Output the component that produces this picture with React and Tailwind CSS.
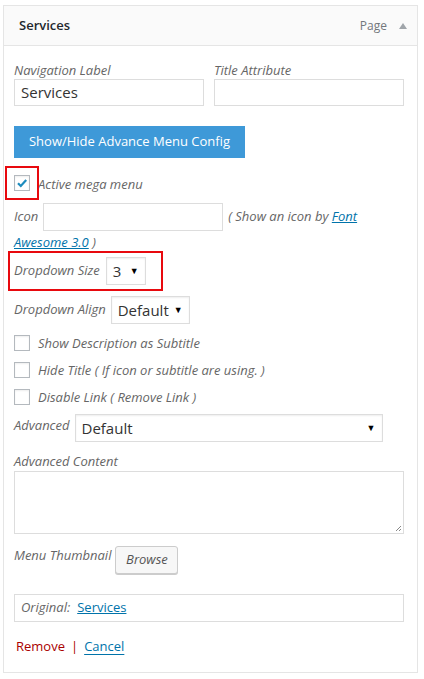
import React from 'react';

const Check = ({ checked }) => (
    <span className="w-4 h-4 border border-[#b4b9be] bg-white flex items-center justify-center shrink-0 shadow-[inset_0_1px_2px_rgba(0,0,0,0.07)]">
        {checked && (
            <svg width="12" height="12" viewBox="0 0 12 12">
                <path d="M2 6.2 L4.8 9 L10.2 3" fill="none" stroke="#1e8cbe" strokeWidth="2.2" />
            </svg>
        )}
    </span>
);

const Select = ({ value, className }) => (
    <div className={'h-[28px] border border-[#ddd] bg-white flex items-center justify-between pl-[6px] pr-[6px] text-[15px] text-[#333] shadow-[inset_0_1px_2px_rgba(0,0,0,0.07)] ' + className}>
        <span>{value}</span>
        <span className="text-[9px] text-black">▼</span>
    </div>
);

const Label = ({ children, className = '' }) => (
    <span className={'italic text-[13px] text-[#666] ' + className}>{children}</span>
);

export default function App() {
    return (
        <div className="bg-white w-[424px] h-[679px] pt-[5px] pl-[3px]" style={{ fontFamily: '"Open Sans", sans-serif' }}>
            <div className="w-[415px] h-[668px] border border-[#e5e5e5]">
                {/* header */}
                <div className="h-[40px] bg-[#fafafa] border-b border-[#e5e5e5] flex items-center justify-between pl-[15px] pr-[10px]">
                    <span className="text-[13px] font-semibold text-[#23282d]">Services</span>
                    <div className="flex items-center gap-[12px]">
                        <span className="text-[12px] text-[#72777c]">Page</span>
                        <svg width="8" height="6" viewBox="0 0 8 6">
                            <path d="M0 6 L4 0 L8 6 Z" fill="#a0a5aa" />
                        </svg>
                    </div>
                </div>

                <div className="pl-[10px] pr-[12px]">
                    {/* nav label / title */}
                    <div className="flex gap-[10px] pt-[15px]">
                        <div className="flex flex-col w-[190px]">
                            <Label className="leading-[18px]">Navigation Label</Label>
                            <div className="h-[27px] border border-[#ddd] bg-white flex items-center px-[6px] text-[15px] text-[#333]">Services</div>
                        </div>
                        <div className="flex flex-col w-[190px]">
                            <Label className="leading-[18px]">Title Attribute</Label>
                            <div className="h-[27px] border border-[#ddd] bg-white"></div>
                        </div>
                    </div>

                    {/* toggle button */}
                    <div className="mt-[20px] w-[231px] h-[32px] bg-[#3e99d8] text-white text-[13px] flex items-center justify-center">
                        Show/Hide Advance Menu Config
                    </div>

                    {/* active mega menu */}
                    <div className="mt-[8px] relative h-[34px] flex items-center">
                        <div className="absolute left-[-9px] top-0 w-[34px] h-[34px] border-2 border-[#e8090e]"></div>
                        <Check checked />
                        <Label className="ml-[8px] mt-[3px]">Active mega menu</Label>
                    </div>

                    {/* icon */}
                    <div className="mt-[3px] h-[28px] flex items-center">
                        <Label>Icon</Label>
                        <span className="ml-[5px] w-[180px] h-[28px] border border-[#ddd] bg-white"></span>
                        <Label className="ml-[5px]">( Show an icon by <span className="text-[#0073aa] underline">Font</span></Label>
                    </div>
                    <div className="mt-[1px] leading-[18px]">
                        <Label><span className="text-[#0073aa] underline">Awesome 3.0</span> )</Label>
                    </div>

                    {/* dropdown size */}
                    <div className="w-[155px] h-[40px] flex items-center -ml-[6px] pl-[4px] border-2 border-[#e8090e]">
                        <Label>Dropdown Size</Label>
                        <Select value="3" className="ml-[6px] w-[40px]" />
                    </div>

                    {/* dropdown align */}
                    <div className="mt-[5px] flex items-center">
                        <Label>Dropdown Align</Label>
                        <Select value="Default" className="ml-[5px] w-[79px]" />
                    </div>

                    {/* options */}
                    <div className="mt-[11px] flex flex-col gap-[11px]">
                        <div className="h-4 flex items-center"><Check /><Label className="ml-[8px] leading-[16px]">Show Description as Subtitle</Label></div>
                        <div className="h-4 flex items-center"><Check /><Label className="ml-[8px] leading-[16px]">Hide Title ( If icon or subtitle are using. )</Label></div>
                        <div className="h-4 flex items-center"><Check /><Label className="ml-[8px] leading-[16px]">Disable Link ( Remove Link )</Label></div>
                    </div>

                    {/* advanced */}
                    <div className="mt-[9px] flex items-start">
                        <Label className="mt-[2px]">Advanced</Label>
                        <Select value="Default" className="ml-[5px] w-[308px]" />
                    </div>

                    <div className="mt-[10px] flex flex-col">
                        <Label className="leading-[18px]">Advanced Content</Label>
                        <div className="mt-[1px] relative w-[390px] h-[63px] border border-[#ddd] bg-white">
                            <svg className="absolute right-[1px] bottom-[1px]" width="7" height="7" viewBox="0 0 7 7">
                                <path d="M6 1 L1 6 M6 4 L4 6" stroke="#888" strokeWidth="1" />
                            </svg>
                        </div>
                    </div>

                    {/* thumbnail */}
                    <div className="mt-[12px] flex items-start">
                        <Label>Menu Thumbnail</Label>
                        <div className="ml-[4px] w-[63px] h-[28px] border border-[#ccc] rounded-[3px] bg-[#f7f7f7] shadow-[0_1px_0_#ccc] flex items-center justify-center italic text-[13px] text-[#555]">Browse</div>
                    </div>

                    {/* original */}
                    <div className="mt-[20px] w-[390px] h-[28px] border border-[#ddd] flex items-center pl-[6px] text-[13px]">
                        <span className="italic text-[#666]">Original:</span>
                        <span className="ml-[7px] text-[#0073aa] underline">Services</span>
                    </div>

                    {/* actions */}
                    <div className="mt-[15px] flex items-center text-[13px] pl-[2px]">
                        <span className="text-[#a00]">Remove</span>
                        <span className="mx-[6px] text-[#a00]">|</span>
                        <span className="text-[#0073aa] underline underline-offset-[3px]">Cancel</span>
                    </div>
                </div>
            </div>
        </div>
    );
}
